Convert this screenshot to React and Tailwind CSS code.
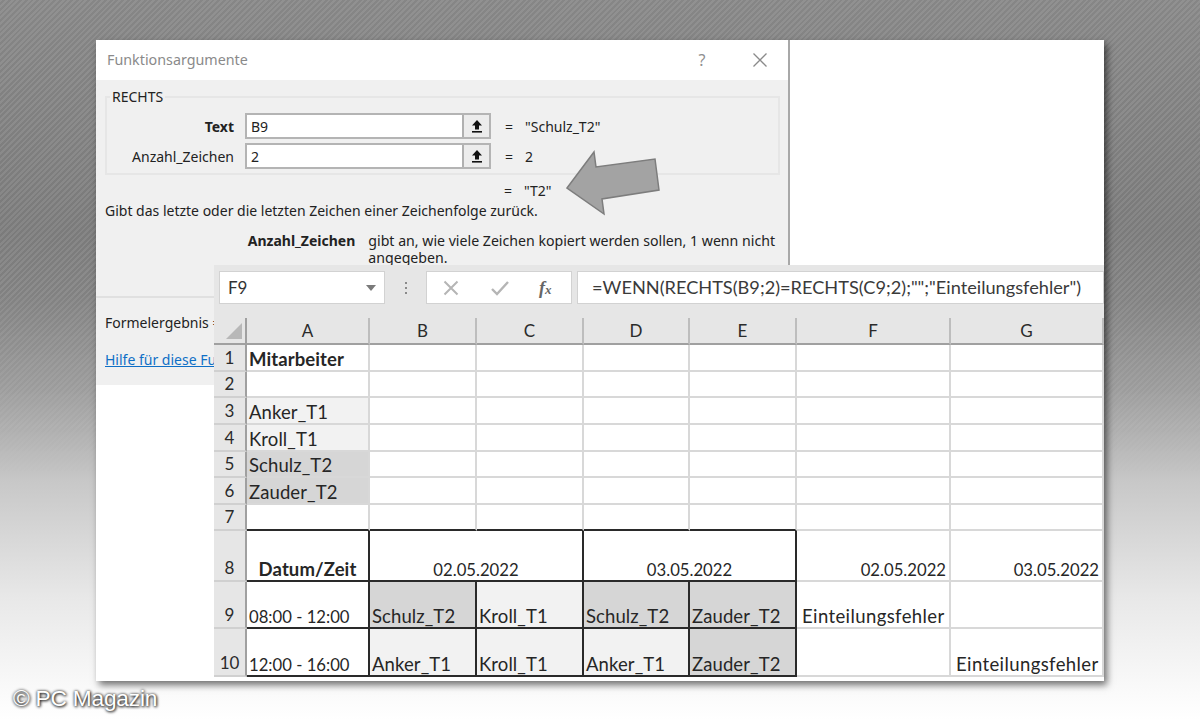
import React from "react";

const columns = ["A", "B", "C", "D", "E", "F", "G"];

const D = "border-r-[#2a2a2a]";
const DB = "border-b-[#2a2a2a]";
const G1 = "bg-[#f2f2f2]";
const G2 = "bg-[#d6d6d6]";
const NUM = "text-[16.7px] leading-[20px]";
const WORD = "text-[18.5px] leading-[21px] tracking-[0.1px]";
const WIDE = "text-[18.5px] leading-[21px] tracking-[0.4px]";

function Cell({ children, span = "", fill = "bg-white", align = "text-left", right = "border-r-[#d8d8d8]", bottom = "border-b-[#d8d8d8]", bold = false, px = "px-[2px]", size = WORD }) {
  return (
    <div className={`flex items-end overflow-hidden whitespace-nowrap border-r-2 border-b-2 ${right} ${bottom} ${span} ${fill} ${px}`}>
      <span className={`block w-full ${size} ${align} ${bold ? "font-bold" : ""}`}>{children}</span>
    </div>
  );
}

function RowHead({ n }) {
  return (
    <div className="flex items-end justify-center border-r-2 border-r-[#a0a0a0] border-b-2 border-b-[#d0d0d0] bg-[#e6e6e6] text-[17px] leading-[24px] text-[#2b2b2b]">
      {n}
    </div>
  );
}

function UploadButton() {
  return (
    <div className="flex w-[27px] items-center justify-center border-l-2 border-l-[#b0b0b0] bg-[#ececec]">
      <svg width="16" height="16" viewBox="0 0 16 16">
        <path d="M8 2 L13 7.5 H10 V11.5 H6 V7.5 H3 Z" fill="#111" />
        <rect x="3" y="13" width="10" height="1.6" fill="#111" />
      </svg>
    </div>
  );
}

function ArgRow({ label, bold, value, result, className = "" }) {
  return (
    <div className={`flex items-center ${className}`}>
      <div className={`w-[138px] pr-[11px] text-right text-[#222] ${bold ? "font-bold" : ""}`}>{label}</div>
      <div className="flex h-[26px] w-[246px] border-2 border-[#b4b4b4] bg-white">
        <div className="flex-1 pl-[4px] leading-[23px] text-[#222]">{value}</div>
        <UploadButton />
      </div>
      <span className="ml-[14px] text-[#222]">=</span>
      <span className="ml-[12px] text-[#222]">{result}</span>
    </div>
  );
}

function Dialog() {
  return (
    <div className="absolute left-[96px] top-[40px] h-[345px] w-[694px] border-r-2 border-r-[#a8a8a8] bg-white font-['Noto_Sans','Open_Sans',sans-serif] text-[14px]">
      <div className="flex h-[40px] items-center pl-[11px] text-[14.3px] text-[#8a8a8a]">
        <span className="flex-1">Funktionsargumente</span>
        <span className="w-[20px] text-center text-[16px] text-[#8f8f8f]">?</span>
        <svg className="ml-[40px] mr-[20px]" width="16" height="16" viewBox="0 0 16 16">
          <path d="M1.5 1.5 L14.5 14.5 M14.5 1.5 L1.5 14.5" stroke="#8a8a8a" strokeWidth="1.3" />
        </svg>
      </div>
      <div className="h-[305px] bg-[#f0f0f0] pl-[9px] pr-[9px]">
        <div className="h-[16px]" />
        <div className="relative h-[79px] w-[675px] border-2 border-[#e6e6e6]">
          <span className="absolute left-[3px] top-[-10px] bg-[#f0f0f0] px-[2px] leading-[18px] text-[#222]">RECHTS</span>
          <ArgRow label="Text" bold value="B9" result={'"Schulz_T2"'} className="mt-[15px]" />
          <ArgRow label="Anzahl_Zeichen" value="2" result="2" className="mt-[4px]" />
        </div>
        <div className="ml-[399px] mt-[6px] flex h-[18px] items-center text-[#222]">
          <span>=</span>
          <span className="ml-[12px]">"T2"</span>
        </div>
        <div className="mt-[3px] leading-[18px] text-[#222]">Gibt das letzte oder die letzten Zeichen einer Zeichenfolge zurück.</div>
        <div className="mt-[13px] flex leading-[16.5px]">
          <div className="w-[256px] text-right font-bold text-[#222]">Anzahl_Zeichen</div>
          <div className="ml-[13px] w-[420px] text-[14.15px] text-[#222]">gibt an, wie viele Zeichen kopiert werden sollen, 1 wenn nicht angegeben.</div>
        </div>
        <div className="-ml-[9px] mt-[30px] h-[2px] w-[118px] bg-[#e0e0e0]" />
        <div className="mt-[16px] whitespace-nowrap leading-[18px] text-[#222]">Formelergebnis =</div>
        <div className="mt-[19px] whitespace-nowrap leading-[18px] text-[#0f6fc6] underline">Hilfe für diese Fu</div>
      </div>
    </div>
  );
}

function FormulaBar() {
  return (
    <div className="flex h-[53px] bg-[#e6e6e6] pl-[5px] pt-[6px] pb-[14px] font-['Lato','Noto_Sans',sans-serif]">
      <div className="flex w-[166px] items-center justify-between border border-[#d2d2d2] bg-white pl-[8px] pr-[8px] text-[17px] text-[#333]">
        F9
        <span className="h-0 w-0 border-x-[5px] border-t-[6px] border-x-transparent border-t-[#7a7a7a]" />
      </div>
      <div className="flex w-[41px] flex-col items-center justify-center gap-[3px]">
        <span className="h-[2px] w-[2px] bg-[#8a8a8a]" />
        <span className="h-[2px] w-[2px] bg-[#8a8a8a]" />
        <span className="h-[2px] w-[2px] bg-[#8a8a8a]" />
      </div>
      <div className="flex w-[146px] items-center border border-[#d2d2d2] bg-white pl-[16px]">
        <svg width="16" height="16" viewBox="0 0 16 16"><path d="M1.5 1.5 L14.5 14.5 M14.5 1.5 L1.5 14.5" stroke="#b5b5b5" strokeWidth="2" /></svg>
        <svg className="ml-[31px]" width="20" height="16" viewBox="0 0 20 16"><path d="M2 9 L7 14 L18 2" fill="none" stroke="#b5b5b5" strokeWidth="2.4" /></svg>
        <span className="ml-[29px] font-['Liberation_Serif',serif] text-[18px] font-bold italic leading-none text-[#666]">f<span className="text-[13px]">x</span></span>
      </div>
      <div className="ml-[5px] flex flex-1 items-center border border-[#d2d2d2] bg-white pl-[14px] text-[18.2px] text-[#3a3a3a]">
        {'=WENN(RECHTS(B9;2)=RECHTS(C9;2);"";"Einteilungsfehler")'}
      </div>
    </div>
  );
}

function EmptyCells({ count }) {
  return Array.from({ length: count }, (_, i) => <Cell key={i} />);
}

function Sheet() {
  return (
    <div className="grid grid-cols-[33px_123px_107px_107px_106px_107px_154px_153px] grid-rows-[27px_27px_26px_27px_27px_26px_27px_26px_51px_47px_48px] bg-white font-['Lato','Noto_Sans',sans-serif] text-[#262626]">
      <div className="relative border-r-2 border-r-[#a0a0a0] border-b-2 border-b-[#a0a0a0] bg-[#e6e6e6]">
        <div className="absolute bottom-[4px] right-[3px] h-0 w-0 border-b-[16px] border-l-[16px] border-b-[#b8b8b8] border-l-transparent" />
      </div>
      {columns.map((c) => (
        <div key={c} className="flex items-center justify-center border-r-2 border-r-[#bdbdbd] border-b-2 border-b-[#a0a0a0] bg-[#e6e6e6] text-[17px] text-[#2b2b2b]">
          {c}
        </div>
      ))}

      <RowHead n={1} />
      <Cell bold>Mitarbeiter</Cell>
      <EmptyCells count={6} />

      <RowHead n={2} />
      <EmptyCells count={7} />

      <RowHead n={3} />
      <Cell fill={G1}>Anker_T1</Cell>
      <EmptyCells count={6} />

      <RowHead n={4} />
      <Cell fill={G1}>Kroll_T1</Cell>
      <EmptyCells count={6} />

      <RowHead n={5} />
      <Cell fill={G2}>Schulz_T2</Cell>
      <EmptyCells count={6} />

      <RowHead n={6} />
      <Cell fill={G2}>Zauder_T2</Cell>
      <EmptyCells count={6} />

      <RowHead n={7} />
      <Cell bottom={DB} /><Cell bottom={DB} /><Cell bottom={DB} /><Cell bottom={DB} /><Cell bottom={DB} /><Cell /><Cell />

      <RowHead n={8} />
      <Cell bold align="text-center" right={D} bottom={DB}>Datum/Zeit</Cell>
      <Cell span="col-span-2" align="text-center" right={D} bottom={DB} size={NUM}>02.05.2022</Cell>
      <Cell span="col-span-2" align="text-center" right={D} bottom={DB} size={NUM}>03.05.2022</Cell>
      <Cell align="text-right" size={NUM} px="px-[3px]">02.05.2022</Cell>
      <Cell align="text-right" size={NUM} px="px-[3px]">03.05.2022</Cell>

      <RowHead n={9} />
      <Cell right={D} bottom={DB} size={NUM}>08:00 - 12:00</Cell>
      <Cell fill={G2} right={D} bottom={DB}>Schulz_T2</Cell>
      <Cell fill={G1} right={D} bottom={DB}>Kroll_T1</Cell>
      <Cell fill={G2} right={D} bottom={DB}>Schulz_T2</Cell>
      <Cell fill={G2} right={D} bottom={DB}>Zauder_T2</Cell>
      <Cell px="px-[5px]" size={WIDE}>Einteilungsfehler</Cell>
      <Cell />

      <RowHead n={10} />
      <Cell right={D} bottom={DB} size={NUM}>12:00 - 16:00</Cell>
      <Cell fill={G1} right={D} bottom={DB}>Anker_T1</Cell>
      <Cell fill={G1} right={D} bottom={DB}>Kroll_T1</Cell>
      <Cell fill={G1} right={D} bottom={DB}>Anker_T1</Cell>
      <Cell fill={G2} right={D} bottom={DB}>Zauder_T2</Cell>
      <Cell />
      <Cell px="px-[5px]" size={WIDE}>Einteilungsfehler</Cell>
    </div>
  );
}

export default function App() {
  return (
    <div className="relative h-[720px] w-[1200px] overflow-hidden bg-[linear-gradient(180deg,#8c8c8c_0%,#808080_32%,#888888_42%,#a0a0a0_54%,#c8c8c8_67%,#e8e8e8_83%,#fafafa_96%,#ffffff_100%)]">
      <div className="absolute inset-x-0 top-0 h-[480px] bg-[repeating-linear-gradient(135deg,rgba(255,255,255,0.05)_0px,rgba(255,255,255,0.05)_2px,rgba(0,0,0,0.04)_2px,rgba(0,0,0,0.04)_4px)] [mask-image:linear-gradient(180deg,#000_0%,#000_60%,transparent_100%)]" />

      {/* backing sheet of the montage */}
      <div className="absolute left-[96px] top-[40px] h-[641px] w-[1008px] bg-white shadow-[3px_4px_7px_rgba(0,0,0,0.55)]" />

      <Dialog />

      <svg className="absolute left-[560px] top-[146px]" width="106" height="76" viewBox="560 146 106 76">
        <path d="M567 188 L594 152 L596 167 L655 159 L659 190 L602 199 L604 214 Z" fill="#a3a3a3" stroke="#7d7d7d" strokeWidth="1.5" />
      </svg>

      <div className="absolute left-[214px] top-[265px] w-[890px]">
        <FormulaBar />
        <Sheet />
      </div>

      <div className="absolute left-[13px] top-[684px] font-['Liberation_Sans',sans-serif] text-[22.7px] leading-[28px] tracking-[-0.2px] text-white [text-shadow:0_0_3px_#222,1px_1px_3px_#222]">
        © PC Magazin
      </div>
    </div>
  );
}
